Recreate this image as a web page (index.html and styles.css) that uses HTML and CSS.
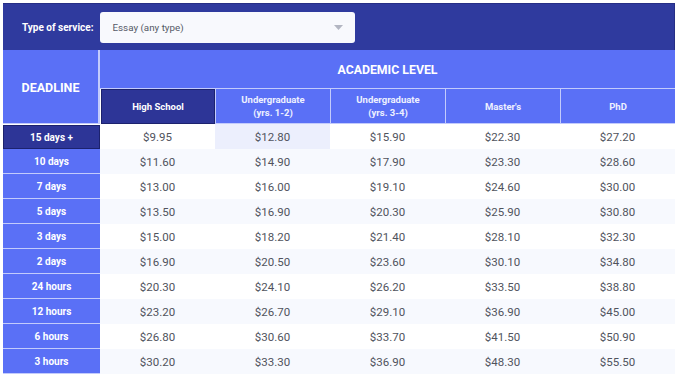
FILE: index.html
```html
<!DOCTYPE html>
<html>
<head>
<meta charset="utf-8">
<link rel="stylesheet" href="styles.css">
</head>
<body>
<div class="pricing">
  <div class="topbar">
    <span class="label">Type of service:</span>
    <div class="select">
      <span>Essay (any type)</span>
      <svg class="arrow" width="9" height="5" viewBox="0 0 9 5"><path d="M0 0h9L4.5 5z" fill="#b3b6c2"/></svg>
    </div>
  </div>
  <div class="grid">
    <div class="deadline-head">DEADLINE</div>
    <div class="academic-head">ACADEMIC LEVEL</div>
    <div class="level active">High School</div>
    <div class="level">Undergraduate<br>(yrs. 1-2)</div>
    <div class="level">Undergraduate<br>(yrs. 3-4)</div>
    <div class="level">Master's</div>
    <div class="level">PhD</div>

    <div class="dl active">15 days +</div>
    <div class="price">$9.95</div><div class="price hl">$12.80</div><div class="price">$15.90</div><div class="price">$22.30</div><div class="price">$27.20</div>

    <div class="dl">10 days</div>
    <div class="price alt">$11.60</div><div class="price alt">$14.90</div><div class="price alt">$17.90</div><div class="price alt">$23.30</div><div class="price alt">$28.60</div>

    <div class="dl">7 days</div>
    <div class="price">$13.00</div><div class="price">$16.00</div><div class="price">$19.10</div><div class="price">$24.60</div><div class="price">$30.00</div>

    <div class="dl">5 days</div>
    <div class="price alt">$13.50</div><div class="price alt">$16.90</div><div class="price alt">$20.30</div><div class="price alt">$25.90</div><div class="price alt">$30.80</div>

    <div class="dl">3 days</div>
    <div class="price">$15.00</div><div class="price">$18.20</div><div class="price">$21.40</div><div class="price">$28.10</div><div class="price">$32.30</div>

    <div class="dl">2 days</div>
    <div class="price alt">$16.90</div><div class="price alt">$20.50</div><div class="price alt">$23.60</div><div class="price alt">$30.10</div><div class="price alt">$34.80</div>

    <div class="dl">24 hours</div>
    <div class="price">$20.30</div><div class="price">$24.10</div><div class="price">$26.20</div><div class="price">$33.50</div><div class="price">$38.80</div>

    <div class="dl">12 hours</div>
    <div class="price alt">$23.20</div><div class="price alt">$26.70</div><div class="price alt">$29.10</div><div class="price alt">$36.90</div><div class="price alt">$45.00</div>

    <div class="dl">6 hours</div>
    <div class="price">$26.80</div><div class="price">$30.60</div><div class="price">$33.70</div><div class="price">$41.50</div><div class="price">$50.90</div>

    <div class="dl">3 hours</div>
    <div class="price alt">$30.20</div><div class="price alt">$33.30</div><div class="price alt">$36.90</div><div class="price alt">$48.30</div><div class="price alt">$55.50</div>
  </div>
</div>
</body>
</html>
```

FILE: styles.css
```css
* { box-sizing: border-box; }
body {
  margin: 0;
  background: #ffffff;
  font-family: Roboto, "Liberation Sans", Arial, sans-serif;
}
.pricing {
  width: 672px;
  margin: 3px;
}
.topbar {
  height: 47px;
  background: #2f3a9e;
  border-top: 1px solid #262e86;
  border-right: 1px solid #262e86;
  display: flex;
  align-items: center;
  padding-left: 19px;
  gap: 6px;
}
.label {
  color: #ffffff;
  font-weight: 700;
  font-size: 10px;
}
.select {
  width: 255px;
  height: 31px;
  background: #f8f9fd;
  border-radius: 3px;
  display: flex;
  align-items: center;
  justify-content: space-between;
  padding: 0 12px 0 13px;
  font-size: 9.8px;
  color: #555a66;
}
.grid {
  display: grid;
  grid-template-columns: 97px repeat(5, 1fr);
  grid-template-rows: 39px 35px;
  grid-auto-rows: 25px;
}
.deadline-head {
  grid-row: 1 / span 2;
  background: #5a70f6;
  border-right: 2px solid #c3cbfc;
  border-bottom: 1px solid #c3cbfc;
  color: #ffffff;
  font-weight: 700;
  font-size: 12.5px;
  display: flex;
  align-items: center;
  justify-content: center;
  padding-top: 2px;
}
.academic-head {
  grid-column: 2 / span 5;
  background: #5a70f6;
  border-bottom: 1px solid #c3cbfc;
  color: #ffffff;
  font-weight: 700;
  font-size: 12.3px;
  display: flex;
  align-items: center;
  justify-content: center;
  padding-top: 2px;
}
.level {
  background: #5a70f6;
  border-left: 1px solid #c3cbfc;
  border-bottom: 1px solid #c3cbfc;
  color: #eef0ff;
  font-weight: 700;
  font-size: 9.5px;
  line-height: 13px;
  text-align: center;
  display: flex;
  align-items: center;
  justify-content: center;
}
.level.active {
  background: #2d3597;
  border: 1px solid #1c226e;
  margin-left: 1px;
  color: #ffffff;
}
.dl {
  background: #5a70f6;
  border-bottom: 1px solid #c3cbfc;
  color: #ffffff;
  font-weight: 700;
  font-size: 10px;
  display: flex;
  align-items: center;
  justify-content: center;
}
.dl.active {
  background: #2d3597;
  border: 1px solid #1c226e;
  margin-top: 1px;
}
.price {
  display: flex;
  align-items: center;
  justify-content: center;
  font-size: 11.5px;
  color: #50535d;
  background: #ffffff;
}
.price.alt { background: #f7f9fe; }
.price.hl { background: #eceffd; }
```
